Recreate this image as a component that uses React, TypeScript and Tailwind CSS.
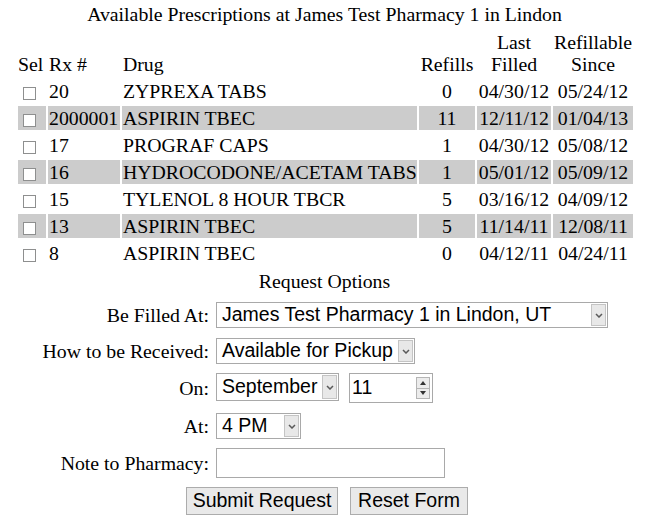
import React from 'react';

const rows = [
  { rx: '20', drug: 'ZYPREXA TABS', refills: '0', last: '04/30/12', since: '05/24/12' },
  { rx: '2000001', drug: 'ASPIRIN TBEC', refills: '11', last: '12/11/12', since: '01/04/13' },
  { rx: '17', drug: 'PROGRAF CAPS', refills: '1', last: '04/30/12', since: '05/08/12' },
  { rx: '16', drug: 'HYDROCODONE/ACETAM TABS', refills: '1', last: '05/01/12', since: '05/09/12' },
  { rx: '15', drug: 'TYLENOL 8 HOUR TBCR', refills: '5', last: '03/16/12', since: '04/09/12' },
  { rx: '13', drug: 'ASPIRIN TBEC', refills: '5', last: '11/14/11', since: '12/08/11' },
  { rx: '8', drug: 'ASPIRIN TBEC', refills: '0', last: '04/12/11', since: '04/24/11' },
];

const serif = "font-['Liberation_Serif','Times_New_Roman',serif]";
const sans = "font-['Liberation_Sans',Arial,sans-serif]";

function Chevron() {
  return (
    <svg width="8" height="5" viewBox="0 0 8 5" className="block">
      <polyline points="1,1 4,4 7,1" fill="none" stroke="#5a5a5a" strokeWidth="1.5" />
    </svg>
  );
}

function FakeSelect({ value, width, height = 'h-[26px]' }: { value: string; width: string; height?: string }) {
  return (
    <div className={`flex ${width} ${height} items-stretch border border-[#a9a9a9] bg-white ${sans} text-[19.5px] leading-none text-black`}>
      <div className="flex flex-1 items-center overflow-hidden whitespace-nowrap pl-[5px]">{value}</div>
      <div className="m-px flex w-[15px] items-center justify-center border border-[#c4c4c4] bg-[#e8e8e8]">
        <Chevron />
      </div>
    </div>
  );
}

export default function App() {
  return (
    <div className={`h-[530px] w-[649px] bg-white text-black ${serif} text-[19.8px]`}>
      <div className="h-[26px] pt-[3px] text-center leading-[22px]">
        Available Prescriptions at James Test Pharmacy 1 in Lindon
      </div>

      <table className="ml-[16px] table-fixed border-separate border-spacing-x-[2px] border-spacing-y-[3px]">
        <thead>
          <tr className="h-[47px] align-bottom leading-[22px]">
            <th className="w-[28px] p-0 pb-px text-left font-normal">Sel</th>
            <th className="w-[72px] p-0 pb-px pl-px text-left font-normal">Rx #</th>
            <th className="w-[295px] p-0 pb-px pl-px text-left font-normal">Drug</th>
            <th className="w-[56px] p-0 pb-px text-center font-normal">Refills</th>
            <th className="w-[74px] p-0 pb-px text-center font-normal">
              Last
              <br />
              Filled
            </th>
            <th className="w-[80px] p-0 pb-px text-center font-normal">
              Refillable
              <br />
              Since
            </th>
          </tr>
        </thead>
        <tbody>
          {rows.map((r, i) => {
            const bg = i % 2 === 1 ? 'bg-[#cccccc]' : '';
            return (
              <tr key={r.rx} className="h-[24px] leading-[22px]">
                <td className={`p-0 ${bg}`}>
                  <div className="flex h-[24px] items-end pb-[3px] pl-[5px]">
                    <span className="block h-[13px] w-[13px] border border-[#8e8f8f] bg-white" />
                  </div>
                </td>
                <td className={`p-0 pl-px ${bg}`}>{r.rx}</td>
                <td className={`whitespace-nowrap p-0 pl-px ${bg}`}>{r.drug}</td>
                <td className={`p-0 text-center ${bg}`}>{r.refills}</td>
                <td className={`p-0 text-center ${bg}`}>{r.last}</td>
                <td className={`p-0 text-center ${bg}`}>{r.since}</td>
              </tr>
            );
          })}
        </tbody>
      </table>

      <div className="h-[24px] pt-[2px] text-center leading-[22px]">Request Options</div>

      <div className="flex flex-col">
        <div className="mt-[10px] flex items-center">
          <div className="w-[212px] pr-[3px] text-right leading-[22px]">Be Filled At:</div>
          <div className="ml-[4px]">
            <FakeSelect value="James Test Pharmacy 1 in Lindon, UT" width="w-[392px]" />
          </div>
        </div>

        <div className="mt-[10px] flex items-center">
          <div className="w-[212px] pr-[3px] text-right leading-[22px]">How to be Received:</div>
          <div className="ml-[4px]">
            <FakeSelect value="Available for Pickup" width="w-[199px]" />
          </div>
        </div>

        <div className="mt-[9px] flex items-center">
          <div className="w-[212px] pr-[3px] text-right leading-[22px]">On:</div>
          <div className="ml-[4px] flex items-start gap-[10px]">
            <FakeSelect value="September" width="w-[123px]" height="h-[28px]" />
            <div className={`flex h-[30px] w-[84px] items-stretch border border-[#a9a9a9] bg-white ${sans} text-[19.5px] leading-none`}>
              <div className="flex flex-1 items-center pl-[2px]">11</div>
              <div className="my-[3px] mr-[2px] flex w-[14px] flex-col border border-[#b5b5b5] bg-[#ececec]">
                <div className="flex flex-1 items-center justify-center border-b border-[#b5b5b5]">
                  <svg width="6" height="4" viewBox="0 0 6 4">
                    <polygon points="0,4 3,0 6,4" fill="#333" />
                  </svg>
                </div>
                <div className="flex flex-1 items-center justify-center">
                  <svg width="6" height="4" viewBox="0 0 6 4">
                    <polygon points="0,0 6,0 3,4" fill="#333" />
                  </svg>
                </div>
              </div>
            </div>
          </div>
        </div>

        <div className="mt-[10px] flex items-center">
          <div className="w-[212px] pr-[3px] text-right leading-[22px]">At:</div>
          <div className="ml-[4px]">
            <FakeSelect value="4 PM" width="w-[85px]" />
          </div>
        </div>

        <div className="mt-[9px] flex items-center">
          <div className="w-[212px] pr-[3px] text-right leading-[22px]">Note to Pharmacy:</div>
          <div className="ml-[4px]">
            <div className="h-[30px] w-[229px] border border-[#a9a9a9] bg-white" />
          </div>
        </div>

        <div className={`mt-[9px] flex justify-center gap-[12px] pl-[5px] ${sans} text-[19.5px]`}>
          <button className="h-[28px] w-[152px] border border-[#acacac] bg-[#e9e9e9] leading-none text-black">
            Submit Request
          </button>
          <button className="h-[28px] w-[118px] border border-[#acacac] bg-[#e9e9e9] leading-none text-black">
            Reset Form
          </button>
        </div>
      </div>
    </div>
  );
}
